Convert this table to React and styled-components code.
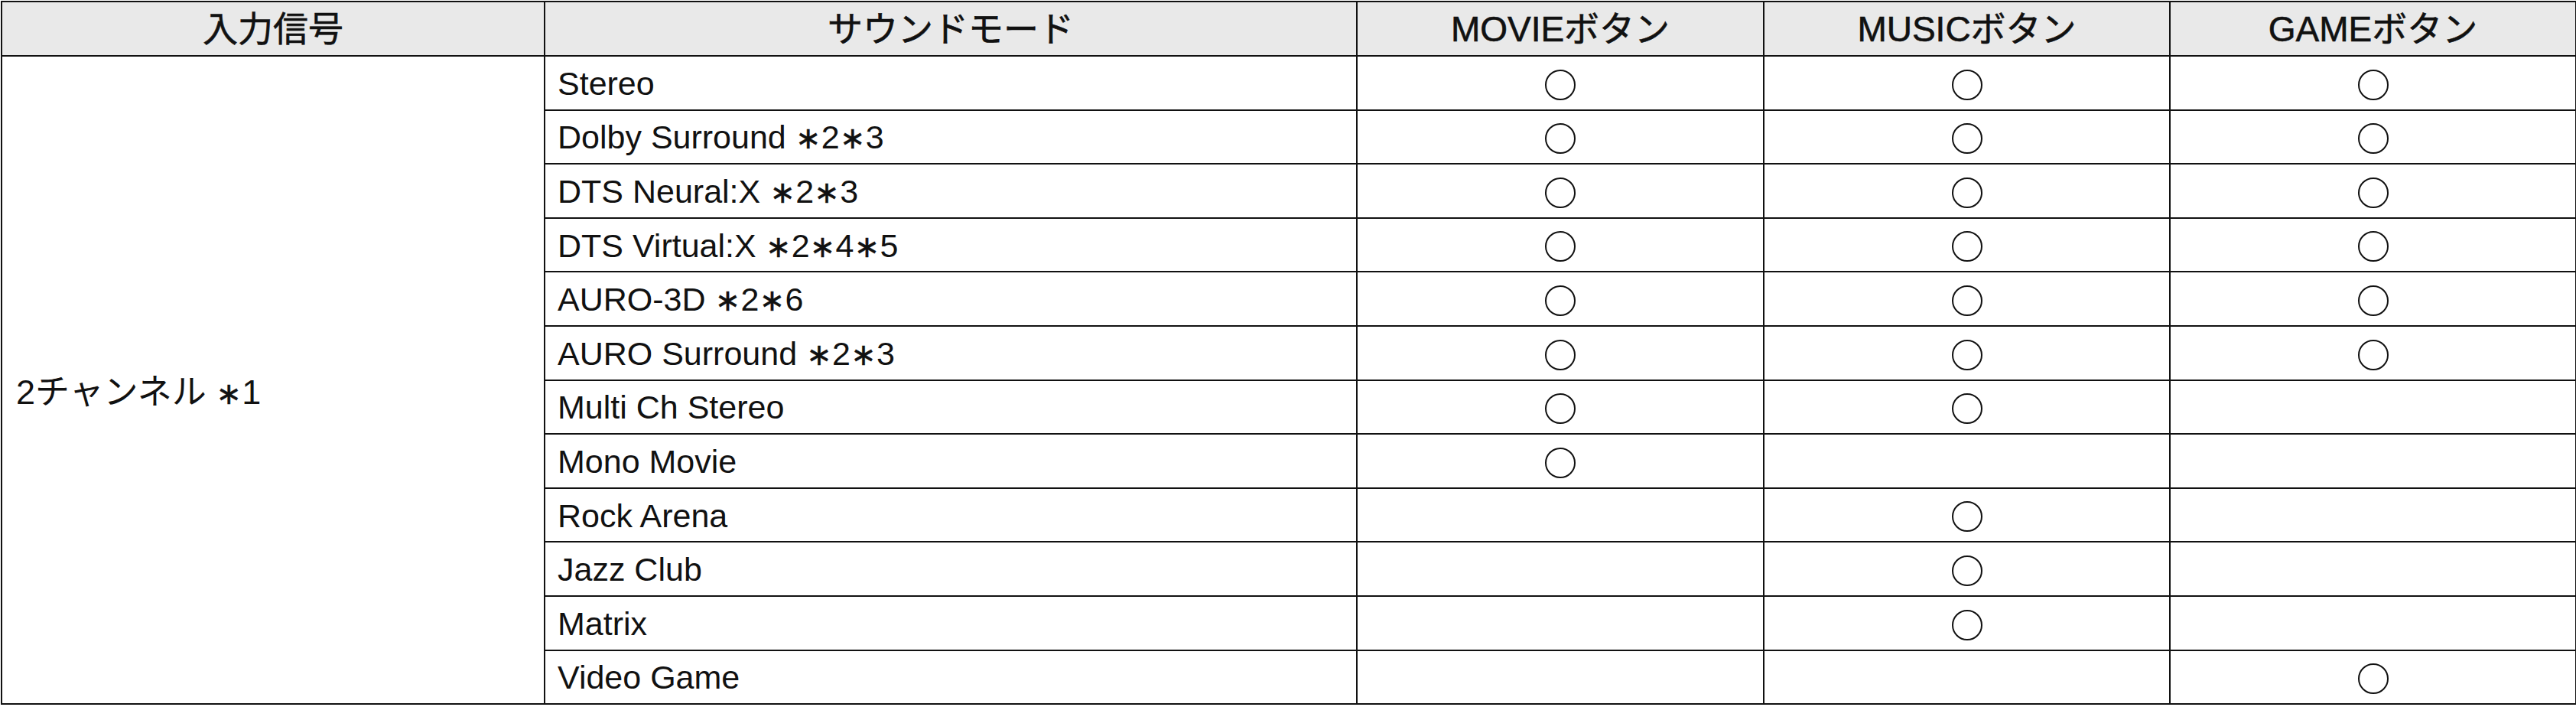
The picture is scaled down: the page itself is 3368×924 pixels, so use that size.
import React from "react";
import styled, { createGlobalStyle } from "styled-components";

const modes = [
  { name: "Stereo", notes: [], movie: true, music: true, game: true },
  { name: "Dolby Surround", notes: [2, 3], movie: true, music: true, game: true },
  { name: "DTS Neural:X", notes: [2, 3], movie: true, music: true, game: true },
  { name: "DTS Virtual:X", notes: [2, 4, 5], movie: true, music: true, game: true },
  { name: "AURO-3D", notes: [2, 6], movie: true, music: true, game: true },
  { name: "AURO Surround", notes: [2, 3], movie: true, music: true, game: true },
  { name: "Multi Ch Stereo", notes: [], movie: true, music: true, game: false },
  { name: "Mono Movie", notes: [], movie: true, music: false, game: false },
  { name: "Rock Arena", notes: [], movie: false, music: true, game: false },
  { name: "Jazz Club", notes: [], movie: false, music: true, game: false },
  { name: "Matrix", notes: [], movie: false, music: true, game: false },
  { name: "Video Game", notes: [], movie: false, music: false, game: true },
];

function Notes({ list }) {
  if (!list.length) return null;
  return (
    <>
      {" "}
      {list.map((n) => (
        <React.Fragment key={n}>
          <Star>∗</Star>
          {n}
        </React.Fragment>
      ))}
    </>
  );
}

export default function App() {
  return (
    <>
      <GlobalStyle />
      <Table>
        <colgroup>
          <col style={{ width: 710 }} />
          <col style={{ width: 1062 }} />
          <col style={{ width: 532 }} />
          <col style={{ width: 531 }} />
          <col style={{ width: 531 }} />
        </colgroup>
        <thead>
          <HeadRow>
            <HeadCell>入力信号</HeadCell>
            <HeadCell>サウンドモード</HeadCell>
            <HeadCell>MOVIEボタン</HeadCell>
            <HeadCell>MUSICボタン</HeadCell>
            <HeadCell>GAMEボタン</HeadCell>
          </HeadRow>
        </thead>
        <tbody>
          {modes.map((m, i) => (
            <Row key={m.name}>
              {i === 0 && (
                <SignalCell rowSpan={modes.length}>
                  2チャンネル <Star>∗</Star>1
                </SignalCell>
              )}
              <ModeCell>
                {m.name}
                <Notes list={m.notes} />
              </ModeCell>
              <MarkCell>{m.movie && <Circle />}</MarkCell>
              <MarkCell>{m.music && <Circle />}</MarkCell>
              <MarkCell>{m.game && <Circle />}</MarkCell>
            </Row>
          ))}
        </tbody>
      </Table>
    </>
  );
}

const GlobalStyle = createGlobalStyle`
  html, body {
    margin: 0;
    padding: 0;
    background: #fff;
  }
  body {
    font-family: "Liberation Sans", "Noto Sans CJK JP", sans-serif;
    color: #111;
  }
`;

const Table = styled.table`
  width: 3367px;
  table-layout: fixed;
  border-collapse: collapse;
  margin: 1px 0 0 1px;
  font-size: 43px;
`;

const HeadRow = styled.tr`
  height: 71px;
  background: #e9e9e9;
`;

const HeadCell = styled.th`
  border: 2px solid #111;
  padding: 0;
  font-weight: 400;
  text-align: center;
  vertical-align: middle;
  font-size: 46px;
  line-height: 1;
  -webkit-text-stroke: 0.6px #111;
`;

const Row = styled.tr`
  height: 70.6px;
`;

const Cell = styled.td`
  border: 2px solid #111;
  padding: 0;
  vertical-align: middle;
  line-height: 1;
`;

const SignalCell = styled(Cell)`
  padding: 32px 0 0 18px;
  font-size: 45px;
`;

const ModeCell = styled(Cell)`
  padding: 2px 0 0 16px;
  white-space: nowrap;
`;

const MarkCell = styled(Cell)`
  text-align: center;
`;

const Star = styled.span`
  font-family: "DejaVu Sans", sans-serif;
  font-size: 40px;
  display: inline-block;
  width: 34px;
  text-align: center;
  -webkit-text-stroke: 0.4px #111;
`;

const Circle = styled.span`
  display: inline-block;
  width: 36px;
  height: 36px;
  border: 2px solid #111;
  border-radius: 50%;
  vertical-align: middle;
`;
